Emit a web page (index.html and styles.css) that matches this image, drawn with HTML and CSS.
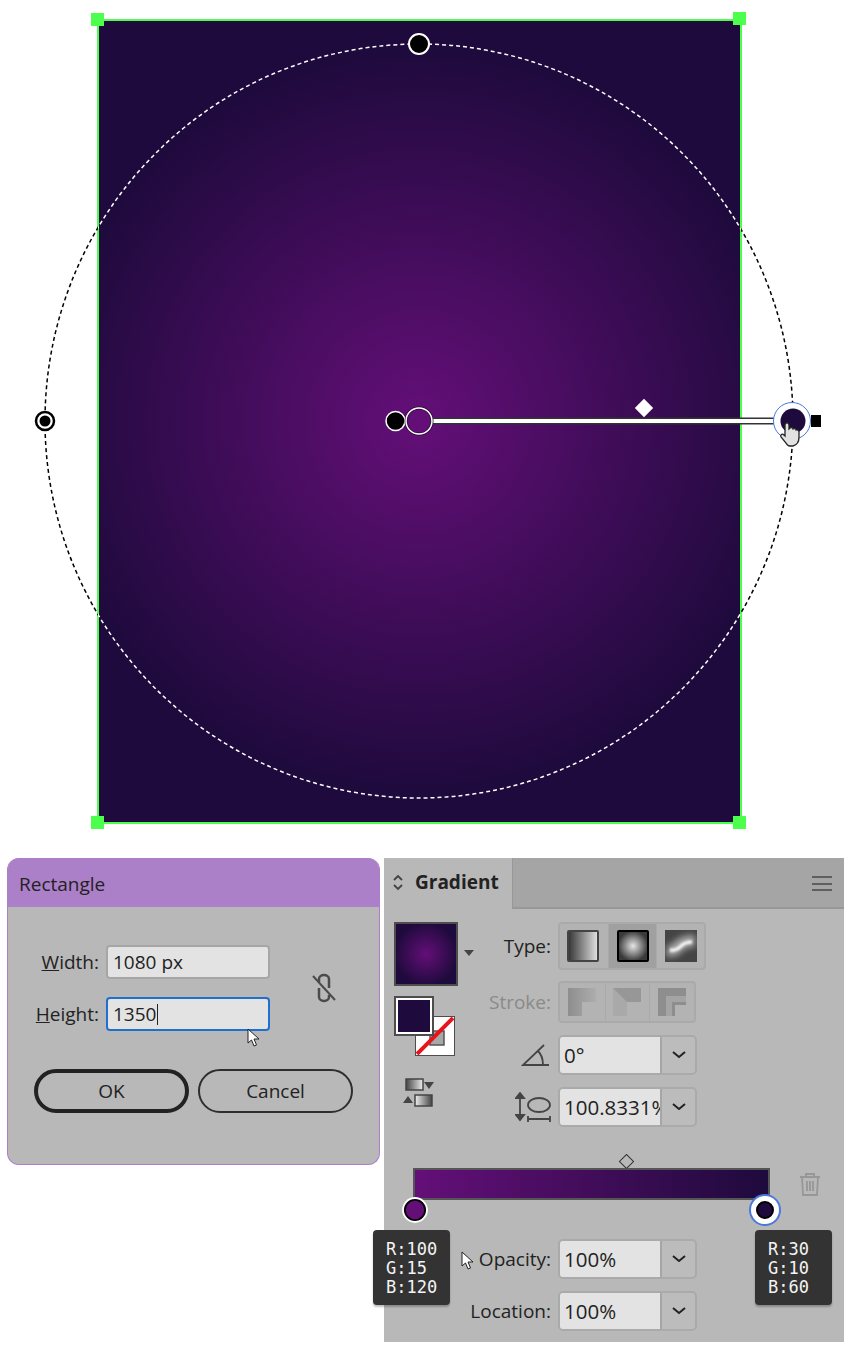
FILE: index.html
```html
<!DOCTYPE html>
<html lang="en">
<head>
    <meta charset="UTF-8">
    <title>Radial gradient - Rectangle and Gradient panels</title>
    <link rel="stylesheet" href="styles.css">
</head>
<body>
    <!-- artboard -->
    <svg class="canvas" width="850" height="850" viewBox="0 0 850 850">
        <defs>
            <radialGradient id="artGradient" gradientUnits="userSpaceOnUse" cx="419" cy="421" r="374">
                <stop offset="0" stop-color="#640f78"/>
                <stop offset="1" stop-color="#1e0a3c"/>
            </radialGradient>
            <clipPath id="insideArt"><rect x="98" y="20" width="643" height="803"/></clipPath>
            <clipPath id="outsideArt"><path clip-rule="evenodd" d="M0 0h850v850H0zM98 20v803h643V20z"/></clipPath>
        </defs>
        <rect x="98" y="20" width="643" height="803" fill="url(#artGradient)" stroke="#4dff4d" stroke-width="2"/>
        <ellipse class="gradient-ring" clip-path="url(#insideArt)" stroke="#fff" cx="419" cy="421" rx="374" ry="377"/>
        <ellipse class="gradient-ring" clip-path="url(#outsideArt)" stroke="#000" cx="419" cy="421" rx="374" ry="377"/>
        <g fill="#4dff4d">
            <rect x="91" y="13" width="13" height="13"/>
            <rect x="733" y="12" width="13" height="13"/>
            <rect x="91" y="816" width="13" height="13"/>
            <rect x="733" y="816" width="13" height="13"/>
        </g>
        <circle cx="419" cy="44" r="10" fill="#000" stroke="#fff" stroke-width="2"/>
        <circle cx="45" cy="421" r="9" fill="#fff" stroke="#000" stroke-width="2.5"/>
        <circle cx="45" cy="421" r="5.5" fill="#000"/>
        <rect x="430" y="417.5" width="346" height="7" fill="#333"/>
        <rect x="430" y="419" width="346" height="4" fill="#fff"/>
        <circle cx="395.500" cy="421" r="9.500" fill="#000" stroke="#fff" stroke-width="1.500"/>
        <circle cx="419" cy="421" r="13" fill="#640f78" stroke="#2a0a38" stroke-width="3"/>
        <circle cx="419" cy="421" r="13" fill="none" stroke="#fff" stroke-width="1.500"/>
        <rect x="637.500" y="401.500" width="13" height="13" fill="#fff" transform="rotate(45 644 408)"/>
        <rect x="811" y="415" width="10" height="12" fill="#000"/>
        <circle cx="792" cy="421" r="18.500" fill="#fff" stroke="#4a78dc" stroke-width="1"/>
        <circle cx="793" cy="421" r="12.500" fill="#1e0a3c"/>
        <path d="M786 425c0-3 4-3 4 0v4l1-1c2-1 3 0 3 1 2-1 3 0 3 1 1.500-.5 3 .5 3 2v5c0 4-2 8-6 9h-3c-2 0-3-1-4-3l-5-6c-1-2 1-4 3-2l1 1z" fill="#e2e2e2" stroke="#222" stroke-width="1.300" transform="translate(-1 0)"/>
    </svg>

    <div class="panels">
        <!-- Rectangle dialog -->
        <section class="dialog">
            <h2 class="dialog-title">Rectangle</h2>
            <div class="dialog-body">
                <div class="size-fields">
                    <div class="size-rows">
                        <div class="size-row">
                            <label class="size-label"><u>W</u>idth:</label>
                            <div class="size-input">1080 px</div>
                        </div>
                        <div class="size-row">
                            <label class="size-label"><u>H</u>eight:</label>
                            <div class="size-input focused">1350<span class="caret"></span></div>
                            <svg class="cursor cursor-dialog" width="14" height="20" viewBox="0 0 14 20"><path d="M1 1v14l3.500-3 2.500 6 2.500-1-2.500-6h5z" fill="#fff" stroke="#222"/></svg>
                        </div>
                    </div>
                    <svg class="link-icon" width="26" height="30" viewBox="0 0 26 30" fill="none" stroke="#4a4a4a" stroke-width="2.500">
                        <path d="M8 9V6a5 4 0 0 1 10 0l0 9"/>
                        <path d="M18 22v2a5 4 0 0 1-10 0l0-9"/>
                        <path d="M2 3l22 24" stroke-width="2"/>
                    </svg>
                </div>
                <div class="dialog-buttons">
                    <button class="pill-button primary">OK</button>
                    <button class="pill-button">Cancel</button>
                </div>
            </div>
        </section>

        <!-- Gradient panel -->
        <section class="gradient-panel">
            <div class="panel-head">
                <div class="panel-tab">
                    <svg width="12" height="17" viewBox="0 0 12 17" fill="none" stroke="#444" stroke-width="1.800"><path d="M2 6l4-4 4 4M2 11l4 4 4-4"/></svg>
                    <span>Gradient</span>
                </div>
                <div class="panel-menu"><span></span><span></span><span></span></div>
            </div>

            <div class="panel-top">
                <div class="swatches">
                    <div class="thumb"></div>
                    <span class="thumb-arrow"></span>
                    <div class="fill-stroke">
                        <div class="stroke-box">
                            <svg width="38" height="38" viewBox="0 0 38 38"><rect x="14" y="14" width="14" height="14" fill="#a8a8a8" stroke="#555" stroke-width="1.500"/><path d="M1 37L37 1" stroke="#e8141c" stroke-width="4"/></svg>
                        </div>
                        <div class="fill-box"></div>
                    </div>
                    <svg class="swap-icon" width="32" height="30" viewBox="0 0 32 30">
                        <defs>
                            <linearGradient id="swapGrad"><stop offset="0" stop-color="#444"/><stop offset="1" stop-color="#eee"/></linearGradient>
                            <linearGradient id="swapGradBack"><stop offset="0" stop-color="#eee"/><stop offset="1" stop-color="#444"/></linearGradient>
                        </defs>
                        <rect x="3" y="1" width="17" height="11" fill="url(#swapGrad)" stroke="#444" stroke-width="1.500"/>
                        <path d="M21 4h10l-5 7z" fill="#444"/>
                        <rect x="12" y="17" width="17" height="11" fill="url(#swapGradBack)" stroke="#444" stroke-width="1.500"/>
                        <path d="M0 25h10l-5-7z" fill="#444"/>
                    </svg>
                </div>

                <div class="controls">
                    <div class="control-row row-type">
                        <span class="control-label">Type:</span>
                        <div class="segments">
                            <div class="segment segment-first">
                                <svg width="32" height="32" viewBox="0 0 32 32">
                                    <defs><linearGradient id="linearIcon"><stop offset="0" stop-color="#333"/><stop offset="1" stop-color="#e4e4e4"/></linearGradient></defs>
                                    <rect x="1" y="1" width="30" height="30" rx="1" fill="url(#linearIcon)" stroke="#444" stroke-width="2"/>
                                </svg>
                            </div>
                            <div class="segment selected">
                                <svg width="32" height="32" viewBox="0 0 32 32">
                                    <defs><radialGradient id="radialIcon"><stop offset="0" stop-color="#e6e6e6"/><stop offset="1" stop-color="#3a3a3a"/></radialGradient></defs>
                                    <rect x="1" y="1" width="30" height="30" rx="1" fill="url(#radialIcon)" stroke="#000" stroke-width="2"/>
                                </svg>
                            </div>
                            <div class="segment">
                                <svg width="32" height="32" viewBox="0 0 32 32">
                                    <defs>
                                        <filter id="freeBlur" filterUnits="userSpaceOnUse" x="0" y="0" width="32" height="32"><feGaussianBlur stdDeviation="3"/></filter>
                                        <filter id="freeCore" filterUnits="userSpaceOnUse" x="0" y="0" width="32" height="32"><feGaussianBlur stdDeviation="1.200"/></filter>
                                    </defs>
                                    <rect width="32" height="32" fill="#444"/>
                                    <g fill="none">
                                        <path d="M2 20c8 2 10-2 13-5s9-4 15-4" stroke="#a8a8a8" stroke-width="12" filter="url(#freeBlur)"/>
                                        <path d="M5 20c7 1 9-2 11-4s6-4 11-4" stroke="#f4f4f4" stroke-width="3.500" filter="url(#freeCore)"/>
                                    </g>
                                </svg>
                            </div>
                        </div>
                    </div>

                    <div class="control-row row-stroke">
                        <span class="control-label disabled">Stroke:</span>
                        <div class="segments small">
                            <div class="segment">
                                <svg width="28" height="28" viewBox="0 0 28 28">
                                    <defs><linearGradient id="strokeFade" x1="0" y1="0" x2="1" y2="0"><stop offset="0" stop-color="#8e8e8e"/><stop offset="1" stop-color="#adadad"/></linearGradient></defs>
                                    <path d="M0 0h28v14H14v14H0z" fill="url(#strokeFade)"/>
                                </svg>
                            </div>
                            <div class="segment">
                                <svg width="28" height="28" viewBox="0 0 28 28">
                                    <path d="M0 0h28v14H14v14H0z" fill="#979797"/>
                                    <path d="M0 0l14 14v14H0z" fill="#a9a9a9"/>
                                </svg>
                            </div>
                            <div class="segment">
                                <svg width="28" height="28" viewBox="0 0 28 28" fill="none">
                                    <path d="M4 28V4h24" stroke="#8e8e8e" stroke-width="8"/>
                                    <path d="M11 28V11h17" stroke="#a4a4a4" stroke-width="6"/>
                                    <path d="M15.500 28V15.500h12.500" stroke="#8e8e8e" stroke-width="3"/>
                                </svg>
                            </div>
                        </div>
                    </div>

                    <div class="control-row row-angle">
                        <span class="control-label">
                            <svg width="30" height="24" viewBox="0 0 30 24" fill="none" stroke="#444" stroke-width="1.800"><path d="M28 22H2L23 2M17 8c3 3 5 8 5 14"/></svg>
                        </span>
                        <div class="combo">
                            <div class="combo-value">0°</div>
                            <div class="combo-arrow"><svg width="14" height="8" viewBox="0 0 14 8" fill="none" stroke="#222" stroke-width="2"><path d="M1 1l6 5 6-5"/></svg></div>
                        </div>
                    </div>

                    <div class="control-row row-aspect">
                        <span class="control-label">
                            <svg width="36" height="30" viewBox="0 0 36 30" fill="none" stroke="#444" stroke-width="1.800"><path d="M5 5v19"/><path d="M1 6l4-5 4 5zM1 23l4 5 4-5z" fill="#444"/><ellipse cx="24" cy="13" rx="11" ry="7"/><path d="M13 27h22M13 24v6M35 24v6"/></svg>
                        </span>
                        <div class="combo">
                            <div class="combo-value">100.8331%</div>
                            <div class="combo-arrow"><svg width="14" height="8" viewBox="0 0 14 8" fill="none" stroke="#222" stroke-width="2"><path d="M1 1l6 5 6-5"/></svg></div>
                        </div>
                    </div>
                </div>
            </div>

            <div class="ramp-area">
                <div class="ramp">
                    <span class="midpoint"></span>
                    <span class="stop stop-start"></span>
                    <span class="stop stop-end"></span>
                    <div class="stop-tip tip-start">R:100<br>G:15<br>B:120</div>
                    <div class="stop-tip tip-end">R:30<br>G:10<br>B:60</div>
                </div>
                <svg class="trash" width="22" height="24" viewBox="0 0 22 24" fill="none" stroke="#979797" stroke-width="1.800"><path d="M1 5h20M7 5V2h8v3M3 5l1 18h14l1-18M8 9v10M11 9v10M14 9v10"/></svg>
            </div>

            <div class="panel-bottom">
                <div class="control-row row-opacity">
                    <span class="control-label">Opacity:</span>
                    <div class="combo">
                        <div class="combo-value">100%</div>
                        <div class="combo-arrow"><svg width="14" height="8" viewBox="0 0 14 8" fill="none" stroke="#222" stroke-width="2"><path d="M1 1l6 5 6-5"/></svg></div>
                    </div>
                    <svg class="cursor cursor-panel" width="14" height="20" viewBox="0 0 14 20"><path d="M1 1v14l3.500-3 2.500 6 2.500-1-2.500-6h5z" fill="#fff" stroke="#222"/></svg>
                </div>
                <div class="control-row">
                    <span class="control-label">Location:</span>
                    <div class="combo">
                        <div class="combo-value">100%</div>
                        <div class="combo-arrow"><svg width="14" height="8" viewBox="0 0 14 8" fill="none" stroke="#222" stroke-width="2"><path d="M1 1l6 5 6-5"/></svg></div>
                    </div>
                </div>
            </div>
        </section>
    </div>
</body>
</html>
```

FILE: styles.css
```css
* {
    margin: 0;
    padding: 0;
    box-sizing: border-box;
}

body {
    font-family: 'Open Sans', 'Liberation Sans', sans-serif;
    font-size: 19px;
    color: #222;
    background: #fff;
}

.canvas {
    display: block;
}

.gradient-ring {
    fill: none;
    stroke-width: 1.5;
    stroke-dasharray: 4 3;
}

.panels {
    display: flex;
    align-items: flex-start;
    gap: 4px;
    padding: 8px 0 0 7px;
}

/* Rectangle dialog */
.dialog {
    width: 373px;
    height: 307px;
    background: #b8b8b8;
    border: 1px solid #ac7fc9;
    border-top: none;
    border-radius: 12px;
    overflow: hidden;
}

.dialog-title {
    height: 49px;
    padding: 14px 11px 0;
    background: #ac7fc9;
    font-size: 19px;
    font-weight: 400;
    line-height: 24px;
}

.dialog-body {
    padding-top: 38px;
}

.size-fields {
    display: flex;
    align-items: center;
}

.size-rows {
    display: flex;
    flex-direction: column;
    gap: 18px;
}

.size-row {
    display: flex;
    align-items: center;
    gap: 7px;
    position: relative;
}

.size-label {
    width: 91px;
    text-align: right;
}

.size-input {
    width: 164px;
    height: 34px;
    padding-left: 5px;
    background: #e3e3e3;
    border: 2px solid #a6a6a6;
    border-radius: 4px;
    line-height: 30px;
}

.size-input.focused {
    border-color: #1f6fd0;
}

.caret {
    display: inline-block;
    width: 1px;
    height: 21px;
    margin-left: 1px;
    vertical-align: -4px;
    background: #222;
}

.link-icon {
    margin-left: 41px;
}

.dialog-buttons {
    display: flex;
    gap: 9px;
    margin-top: 38px;
    padding-left: 26px;
}

.pill-button {
    width: 155px;
    height: 44px;
    background: transparent;
    border: 2px solid #2e2e2e;
    border-radius: 22px;
    font-family: inherit;
    font-size: 19px;
    color: #222;
}

.pill-button.primary {
    border-width: 4px;
    border-color: #222;
}

.cursor {
    position: absolute;
}

.cursor-dialog {
    left: 239px;
    top: 31px;
}

.cursor-panel {
    left: 0;
    top: 12px;
}

/* Gradient panel */
.gradient-panel {
    width: 460px;
    height: 484px;
    background: #b8b8b8;
}

.panel-head {
    display: flex;
    height: 51px;
    background: #a5a5a5;
    border-bottom: 2px solid #989898;
}

.panel-tab {
    display: flex;
    align-items: center;
    gap: 11px;
    width: 129px;
    height: 51px;
    padding: 0 0 3px 8px;
    background: #b8b8b8;
    border-right: 1px solid #989898;
    font-weight: 700;
}

.panel-menu {
    display: flex;
    flex-direction: column;
    gap: 4.5px;
    margin: 18px 0 0 auto;
    padding-right: 12px;
}

.panel-menu span {
    display: block;
    width: 20px;
    height: 2px;
    background: #5f5f5f;
}

.panel-top {
    display: flex;
    padding: 13px 0 0 10px;
}

.swatches {
    position: relative;
    width: 67px;
}

.thumb {
    width: 64px;
    height: 64px;
    background: radial-gradient(circle, #640f78 0%, #1e0a3c 75%);
    border: 2px solid #4d4d4d;
}

.thumb-arrow {
    position: absolute;
    left: 70px;
    top: 28px;
    border-style: solid;
    border-width: 6px 5px 0;
    border-color: #444 transparent transparent;
}

.fill-stroke {
    position: relative;
    width: 60px;
    height: 60px;
    margin-top: 10px;
}

.fill-box {
    position: absolute;
    left: 0;
    top: 0;
    width: 40px;
    height: 40px;
    background: #1e0a3c;
    border: 2px solid #4d4d4d;
    box-shadow: inset 0 0 0 2px #fff;
}

.stroke-box {
    position: absolute;
    left: 21px;
    top: 20px;
    width: 40px;
    height: 40px;
    background: #fff;
    border: 1px solid #4d4d4d;
}

.stroke-box svg {
    display: block;
}

.swap-icon {
    display: block;
    margin: 22px 0 0 9px;
}

.controls {
    display: flex;
    flex-direction: column;
}

.control-row {
    display: flex;
    align-items: center;
    gap: 7px;
    position: relative;
}

.row-type {
    height: 48px;
}

.row-stroke {
    height: 42px;
    margin-top: 11px;
}

.row-angle {
    height: 40px;
    margin-top: 12px;
}

.row-aspect {
    height: 40px;
    margin-top: 12px;
}

.row-opacity {
    margin-bottom: 12px;
}

.control-label {
    display: flex;
    justify-content: flex-end;
    width: 90px;
}

.control-label.disabled {
    color: #8a8a8a;
}

.segments {
    display: flex;
    height: 100%;
    background: #b3b3b3;
    border: 2px solid #aaa;
    border-radius: 4px;
}

.segment {
    display: flex;
    align-items: center;
    justify-content: center;
    width: 48px;
    border-left: 1px solid #aaa;
}

.segment:first-child {
    border-left: none;
}

.segment-first {
    padding-right: 3px;
}

.segment svg {
    display: block;
}

.segment.selected {
    background: #a0a0a0;
}

.segments.small .segment {
    width: 44.500px;
}

.combo {
    display: flex;
    width: 139px;
    height: 40px;
    background: #bcbcbc;
    border: 2px solid #aaa;
    border-radius: 5px;
    overflow: hidden;
}

.combo-value {
    width: 102px;
    padding-left: 4px;
    background: #e3e3e3;
    border-right: 2px solid #a6a6a6;
    font-size: 20.500px;
    line-height: 36px;
    white-space: nowrap;
    overflow: hidden;
}

.combo-arrow {
    display: flex;
    flex: 1;
    align-items: center;
    justify-content: center;
}

.ramp-area {
    display: flex;
    align-items: center;
    gap: 29px;
    padding: 41px 0 0 29px;
}

.ramp {
    position: relative;
    width: 357px;
    height: 32px;
    background: linear-gradient(90deg, #640f78, #1e0a3c);
    border: 2px solid #555;
}

.midpoint {
    position: absolute;
    left: 206px;
    top: -14px;
    width: 11px;
    height: 11px;
    background: #b8b8b8;
    border: 1.500px solid #333;
    transform: rotate(45deg);
}

.stop {
    position: absolute;
    border-radius: 50%;
    background: #640f78;
    border: 2px solid #000;
}

.stop-start {
    left: -12px;
    top: 28px;
    width: 24px;
    height: 24px;
    box-shadow: 0 0 0 2px #fff;
    transform: scale(0.92);
}

.stop-end {
    left: 341px;
    top: 31px;
    width: 18px;
    height: 18px;
    background: #1e0a3c;
    box-shadow: 0 0 0 5px #fff, 0 0 0 7px #4a78dc;
}

.stop-tip {
    position: absolute;
    top: 60px;
    width: 77px;
    height: 75px;
    padding: 10px 0 0 13px;
    background: #333;
    border-radius: 4px;
    box-shadow: 0 2px 2px rgba(0, 0, 0, 0.25);
    color: #f4f4f4;
    font-family: 'DejaVu Sans Mono', 'Liberation Mono', monospace;
    font-size: 17px;
    line-height: 19px;
    z-index: 1;
}

.tip-start {
    left: -42px;
}

.tip-end {
    left: 340px;
}

.trash {
    display: block;
}

.panel-bottom {
    padding: 39px 0 0 77px;
}
```
